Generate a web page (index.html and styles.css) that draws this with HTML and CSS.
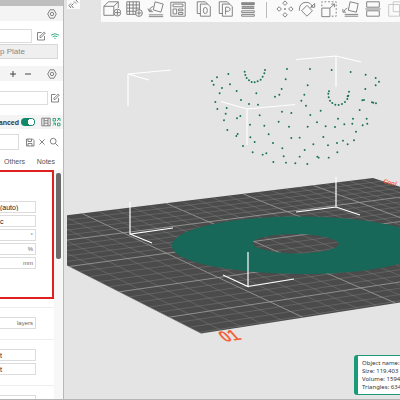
FILE: index.html
```html
<!DOCTYPE html>
<html lang="en">
<head>
<meta charset="utf-8">
<title>Prepare</title>
<link rel="stylesheet" href="styles.css">
</head>
<body>
<svg class="defs" aria-hidden="true">
  <symbol id="gear" viewBox="0 0 10 10"><path d="M3 .8h4L9.3 5 7 9.2H3L.7 5z"/><circle cx="5" cy="5" r="1.7"/></symbol>
  <symbol id="edit" viewBox="0 0 10 10"><path d="M5.5 1.5H1.5v7.5h7V5M4 6.5V5.2L8.2 1 9.3 2 5.2 6.5z"/></symbol>
</svg>

<aside class="sidebar">
  <div class="topbar"></div>
  <div class="section-head">
    <button class="icon" aria-label="Printer settings"><svg><use href="#gear"/></svg></button>
  </div>
  <div class="printer">
    <div class="line">
      <input class="field" type="text" aria-label="Printer">
      <button class="icon" aria-label="Edit printer"><svg><use href="#edit"/></svg></button>
      <button class="icon wifi" aria-label="Connection"><svg viewBox="0 0 10 10"><path d="M1 4.2Q5 1.2 9 4.2M2.6 5.8Q5 4 7.4 5.8M4.4 7.4h1.2"/></svg></button>
    </div>
    <button class="plate">p Plate</button>
  </div>
  <div class="section-head filaments">
    <button class="icon sign" aria-label="Add filament"><svg viewBox="0 0 10 10"><path d="M5 2v6M2 5h6"/></svg></button>
    <button class="icon sign" aria-label="Remove filament"><svg viewBox="0 0 10 10"><path d="M2 5h6"/></svg></button>
    <button class="icon last" aria-label="Filament settings"><svg><use href="#gear"/></svg></button>
  </div>
  <div class="filament line">
    <input class="field" type="text" aria-label="Filament">
    <button class="icon" aria-label="Edit filament"><svg><use href="#edit"/></svg></button>
  </div>
  <div class="mode">
    <label for="advanced">anced</label>
    <input class="toggle" type="checkbox" id="advanced" checked>
    <button class="icon" aria-label="Parameter list"><svg viewBox="0 0 10 10"><path d="M.8 1.2h8.4v7.6H.8zM3 1.2v7.6M7 1.2v7.6M3 3.7h4M3 6.2h4"/></svg></button>
    <button class="icon green" aria-label="Compare presets"><svg viewBox="0 0 10 10"><path d="M2 1.5h2.5v2.5H2zM6 4l3-3M6.5 1.5h2.5v2.5M2 6h2.5v2.5M2 8.5l2.5-2.5M6.5 6.2H9v2.6H6.500z"/></svg></button>
  </div>
  <div class="preset">
    <select aria-label="Process preset"><option></option></select>
    <button class="icon" aria-label="Save"><svg viewBox="0 0 10 10"><path d="M1.500 2h6L9 3.500V9H1.500zM3 2v2.500h3.500V2M3 9V6.500h4V9"/></svg></button>
    <button class="icon" aria-label="Discard"><svg viewBox="0 0 10 10"><path d="M2.500 2.500l5 5M7.500 2.500l-5 5"/></svg></button>
    <button class="icon" aria-label="Search"><svg viewBox="0 0 10 10"><circle cx="4.200" cy="4.200" r="2.900"/><path d="M6.300 6.300L9.300 9.300"/></svg></button>
  </div>
  <nav class="tabs">
    <a href="#others">Others</a>
    <a href="#notes">Notes</a>
  </nav>
  <div class="params">
    <div class="groups">
      <div class="group support">
        <select class="value" aria-label="Type"><option>(auto)</option></select>
        <select class="value" aria-label="Style"><option>c</option></select>
        <div class="value"><input type="text" id="angle" aria-label="Threshold angle"><label for="angle">°</label></div>
        <div class="value"><input type="text" id="overlap" aria-label="Threshold overlap"><label for="overlap">%</label></div>
        <div class="value"><input type="text" id="expand" aria-label="Expansion"><label for="expand">mm</label></div>
      </div>
      <div class="group">
        <div class="value"><input type="text" id="raft"><label for="raft">layers</label></div>
      </div>
      <div class="group">
        <select class="value" aria-label="Support base"><option>t</option></select>
        <select class="value" aria-label="Support interface"><option>t</option></select>
      </div>
      <div class="group">
        <div class="value"><input type="text" aria-label="Speed"></div>
      </div>
    </div>
    <div class="track"><div class="thumb"></div></div>
  </div>
</aside>

<main class="view">
  <svg class="scene" viewBox="64 0 336 400" preserveAspectRatio="xMinYMin slice" role="img" aria-label="Build plate">
    <clipPath id="plateShape"><path d="M67 215.300L373 178L640 265L201 333.500L67 265.500z"/></clipPath>
    <path class="bed" d="M67 215.300L373 178L640 265L201 333.500L67 265.500z"/>
    <g id="grid" clip-path="url(#plateShape)"></g>
    <path class="part" fill-rule="evenodd" d="M172 246C172 229 230 216.500 298 216.500S428 229 428 245S374 274 306 274S172 263 172 246zM253 242C256 237 276 234 296 234S339 239 339 244S318 253.500 296 253.500S250 248 253 242z"/>
    <path class="bracket" d="M171 70L128 74L149 80M128 74V106M296 59.500L336 56L361 62M336 56V87M221 101.500L247 109L295 104.500M247 109V145M130 202V234L173 228M130 234L152 243M336 177V207L296 212M336 207L360 215M248 252V286.500L223 275M248 286.500L294 279"/>
    <g id="dots" transform="translate(200 50) scale(.3333)"></g>
    <text class="number" transform="translate(225 342) rotate(-8) skewX(34)">01</text>
    <text class="name" transform="translate(383 183) rotate(12)">Cool</text>
  </svg>

  <div class="toolbar">
    <button aria-label="Add"><svg viewBox="0 0 20 20"><path d="M1 7h11v10H1zM1 7l5-5h11l-5 5M17 2v7M12 17l1-1"/><circle class="fill" cx="16" cy="14" r="3.800"/><path d="M16 11v6M13 14h6"/></svg></button>
    <button aria-label="Add plate"><svg viewBox="0 0 20 20"><path d="M2 2h14v14H2zM5 2v14M9 2v14M12.500 2v14M2 5.500h14M2 9h14M2 12.500h14"/><circle class="fill" cx="15.500" cy="14.500" r="3.800"/><path d="M15.500 11.500v6M12.500 14.500h6"/></svg></button>
    <button aria-label="Auto orient"><svg viewBox="0 0 20 20"><path d="M9 2l9 2.500-2.500 9L7 11zM2 16.500h16M2 18.500h16M7 7q-4 1-4.500 5M1 9.500l1.500 3 3-1.500M2.500 13h4"/></svg></button>
    <button aria-label="Arrange"><svg viewBox="0 0 20 20"><path d="M2 2.500h16v15.500H2zM4.500 4.500h11v3h-11zM4.500 10h4v5.500h-4zM10.500 10h5v2h-5zM10.500 14h5v2h-5z"/></svg></button>
    <span class="gap"></span>
    <button aria-label="Split to objects"><svg viewBox="0 0 20 20"><path d="M6 15H2.500V2h9L14 4.500"/><path d="M6 4.500h8l3 3V18H6z"/><ellipse cx="11.500" cy="11.700" rx="2.200" ry="3.500"/></svg></button>
    <button aria-label="Split to parts"><svg viewBox="0 0 20 20"><path d="M6 15H2.500V2h9L14 4.500"/><path d="M6 4.500h8l3 3V18H6zM9.500 16V8h3q2 .5 2 2.300T12.500 12.500h-3"/></svg></button>
    <button aria-label="Layer height"><svg viewBox="0 0 20 20"><path d="M3 3h14v2H3zM3 7h14M3 9.500h14M3 12h14v2H3zM3 16h14v2H3z"/><path d="M3 4h14M3 8h14"/></svg></button>
    <span class="sep"></span>
    <button aria-label="Move"><svg viewBox="0 0 20 20"><path d="M10 1l2.500 2.500L10 6 7.500 3.500zM10 14l2.500 2.500L10 19l-2.500-2.500zM3.500 7.500L6 10l-2.500 2.500L1 10zM16.500 7.500L19 10l-2.500 2.500L14 10zM9 10h2M10 9v2"/></svg></button>
    <button aria-label="Rotate"><svg viewBox="0 0 20 20"><path d="M10 6l6 6-6 6-6-6zM1.500 12Q1 3 9 2.500q5 0 7 5M18.500 4v4h-4.500z"/></svg></button>
    <button aria-label="Scale"><svg viewBox="0 0 20 20"><path d="M2 9h9v9.500H2zM11 9l5-4.500M12.500 4.500H16V8"/><path stroke-dasharray="2 2" d="M2 7V2h16v16h-6"/></svg></button>
    <button aria-label="Lay on face"><svg viewBox="0 0 20 20"><path d="M9 2l9 2-2 9.500-9-2zM3 16h15M3 18h15M6 9q-3 1-4 4M1 10v3.500h3.500"/></svg></button>
    <button aria-label="Cut"><svg viewBox="0 0 20 20"><path d="M3 2h14v6H3zM1.500 10h17M3 12h14v6H3z"/></svg></button>
    <button aria-label="Boolean" disabled><svg viewBox="0 0 20 20"><path d="M3 5h12v13H3z"/><path d="M8 2h11v11H8z"/></svg></button>
  </div>

  <button class="collapse" aria-label="Collapse sidebar"><svg viewBox="0 0 11 9"><path d="M3 3.500L1 5.500 3 8M5.500 3.500L3.500 5.500 5.500 8M6 1.500L8 3.500M8 0l2 2.500"/></svg></button>

  <div class="info">
    <div>Object name:</div>
    <div>Size: 119.403</div>
    <div>Volume: 1594</div>
    <div>Triangles: 634</div>
  </div>
</main>
<script src="script.js"></script>
</body>
</html>
```

FILE: styles.css
```css
* {
  box-sizing: border-box;
}
body {
  margin: 0;
  height: 100vh;
  display: flex;
  overflow: hidden;
  font-family: "Liberation Sans", Arial, sans-serif;
  font-size: 7px;
  color: #333;
  background: #e4e4e4;
  border-bottom: 1px solid #b5b5b5;
}
button, input, select {
  font: inherit;
  color: inherit;
  margin: 0;
  padding: 0;
  border: 0;
  background: none;
  appearance: none;
}
svg {
  fill: none;
  stroke: #777;
}
.defs {
  position: absolute;
  width: 0;
  height: 0;
}

.sidebar {
  width: 64px;
  flex: none;
  display: flex;
  flex-direction: column;
  background: #fff;
  border-right: 1px solid #b8b8b8;
}
.topbar {
  height: 6px;
  flex: none;
  background: #bfbfbf;
}
.section-head {
  display: flex;
  justify-content: flex-end;
  align-items: center;
  gap: 5px;
  height: 15px;
  padding-right: 6px;
  background: #f4f4f4;
}
.filaments {
  justify-content: flex-start;
  padding-left: 8px;
}
.last {
  margin-left: auto;
}
.icon {
  width: 10px;
  height: 10px;
  flex: none;
  display: block;
}
.icon svg {
  display: block;
  width: 10px;
  height: 10px;
  stroke-width: .9;
}
.sign svg {
  stroke: #333;
}
.wifi svg, .green svg {
  stroke: #1fa57e;
}
.line {
  display: flex;
  align-items: center;
  gap: 0 4px;
}
.field {
  flex: 1;
  min-width: 0;
  height: 14px;
  border: 1px solid #dcdcdc;
  border-left: 0;
}
.printer {
  padding: 8px 5px 7px 0;
}
.printer .wifi {
  margin-right: -2px;
}
.plate {
  display: block;
  width: 100%;
  height: 15px;
  margin-top: 1px;
  font-size: 8px;
  text-align: left;
  color: #888;
  background: #efefef;
  border: 1px solid #d8d8d8;
  border-left: 0;
  white-space: nowrap;
}
.filament {
  padding: 10px 3px 10px 0;
  gap: 2px;
}
.mode {
  display: flex;
  align-items: center;
  height: 14px;
  background: #f4f4f4;
}
.mode label {
  width: 21px;
  font-weight: bold;
  display: flex;
  justify-content: flex-end;
  padding-right: 2px;
}
.toggle {
  width: 14px;
  height: 8px;
  margin-right: 6px;
  border-radius: 4px;
  background: radial-gradient(circle at 10px 4px, #fff 3px, #12876a 3px);
}
.preset {
  display: flex;
  align-items: center;
  justify-content: space-between;
  padding: 5px 4px 4px 0;
}
.preset select {
  width: 19px;
  height: 16px;
  margin-right: 4px;
  border: 1px solid #dcdcdc;
  border-left: 0;
}
.tabs {
  display: flex;
  justify-content: space-between;
  padding: 3px 8px 4px 4px;
  line-height: 9px;
}
.tabs a {
  color: #555;
  text-decoration: none;
}

.params {
  flex: 1;
  min-height: 0;
  display: flex;
}
.groups {
  flex: 1;
  overflow: hidden;
}
.group {
  display: flex;
  flex-direction: column;
  gap: 2px;
  padding: 9px 0 10px;
  border-top: 1px solid #eee;
}
.support {
  padding: 29px 0 28px;
  margin-bottom: 8px;
  border: 2px solid #e01f1f;
  border-left: 0;
}
.value {
  display: flex;
  align-items: center;
  width: 36px;
  height: 12px;
  padding-right: 2px;
  flex: none;
  border: 1px solid #dcdcdc;
  border-left: 0;
  color: #222;
}
.value input {
  flex: 1;
  min-width: 0;
  width: 0;
}
.value label {
  color: #666;
  font-size: 6px;
}
.track {
  width: 9px;
  padding: 3px 2px;
  background: #f7f7f7;
}
.thumb {
  height: 86px;
  border-radius: 2px;
  background: #6a6a6a;
}

.view {
  flex: 1;
  min-width: 0;
  position: relative;
  overflow: hidden;
}
.scene {
  display: block;
  width: 100%;
  height: 100vh;
  stroke: none;
}
.bed {
  fill: #4a4b4a;
}
.thin {
  stroke: #7b7c7b;
  stroke-width: .5;
}
.bold {
  stroke: #a0a1a0;
  stroke-width: .8;
}
.part {
  fill: #18685a;
}
.bracket {
  stroke: #fff;
  stroke-width: 1.2;
}
.dot {
  fill: #18705a;
}
.number, .name {
  fill: #f2633a;
  font-weight: bold;
}
.number {
  font-size: 16px;
}
.name {
  font-size: 6px;
  font-style: italic;
}
.toolbar {
  position: absolute;
  top: 0;
  left: 37px;
  right: 0;
  height: 22px;
  display: flex;
  overflow: hidden;
  background: #fafafa;
}
.toolbar button {
  width: 22px;
  flex: none;
  padding: 0 2px 4px;
}
.toolbar svg {
  display: block;
  width: 18px;
  height: 18px;
}
.toolbar .fill {
  fill: #fafafa;
}
.toolbar button:disabled {
  opacity: .4;
}
.gap {
  width: 4px;
  flex: none;
}
.sep {
  width: 1px;
  height: 16px;
  margin: 2px 7px;
  flex: none;
  background: #bbb;
}
.collapse {
  position: absolute;
  left: 3px;
  top: 0;
  width: 13px;
  height: 9px;
  background: #fafafa;
}
.collapse svg {
  display: block;
  width: 11px;
  height: 9px;
  margin: 0 auto;
}
.info {
  position: absolute;
  right: 0;
  bottom: 4px;
  padding: 3px 0 3px 4px;
  border-left: 4px solid #1b9a78;
  border-top: 1px solid #1b9a78;
  border-bottom: 1px solid #1b9a78;
  border-radius: 3px 0 0 3px;
  width: 46px;
  overflow: hidden;
  white-space: nowrap;
  font-family: "Noto Sans", sans-serif;
  font-size: 6px;
  line-height: 8px;
  background: #fff;
}
```

FILE: script.js
```javascript
const svgNS = 'http://www.w3.org/2000/svg';

function add(parent, tag, attrs) {
  const el = document.createElementNS(svgNS, tag);
  for (const key in attrs) el.setAttribute(key, attrs[key]);
  parent.appendChild(el);
  return el;
}

function line(parent, x1, y1, x2, y2, bold) {
  add(parent, 'line', { x1, y1, x2, y2, class: bold ? 'bold' : 'thin' });
}

// every fifth line is a bold one, the values are where the bold ones start
const topX = [-13, 82, 166, 243, 313, 373];
const bottomX = [201, 303, 395, 480, 560, 635];
const leftX = [219, 169, 119, 69, 27, -13];

const topY = x => 215.3 - 0.122 * (x - 67);
const bottomY = x => 333.5 - 0.158 * (x - 201);
const leftY = x => 265.5 + 0.507 * (x - 67);

function drawGrid(parent) {
  for (let i = 0; i < 5; i++) {
    for (let k = 0; k < 5; k++) {
      const t = k / 5;
      const a = topX[i] + (topX[i + 1] - topX[i]) * t;
      const b = bottomX[i] + (bottomX[i + 1] - bottomX[i]) * t;
      line(parent, a, topY(a), b, bottomY(b), k === 0);

      const x = leftX[i] + (leftX[i + 1] - leftX[i]) * t;
      const slope = 0.122 + 0.036 * (x + 13) / 214;
      line(parent, x, leftY(x), x + 600, leftY(x) - slope * 600, k === 0);
    }
  }
}
drawGrid(document.getElementById('grid'));

const dots = [
  [36,93],[41,104],[51,82],[85,72],[66,114],[59,130],[90,103],[110,123],[46,156],[52,177],
  [80,174],[77,191],[72,211],[82,240],[123,150],[147,162],[174,164],[169,130],[225,140],[238,134],
  [245,117],[257,88],[261,57],[330,57],[395,60],[452,66],[497,74],[527,84],[537,95],[527,106],
  [496,117],[323,106],[313,134],[304,152],[318,167],[362,182],[331,195],[351,217],[323,230],[267,230],
  [274,189],[246,185],[236,215],[179,196],[193,227],[150,224],[121,198],[111,205],[113,252],[109,258],
  [151,262],[164,276],[129,288],[158,307],[188,314],[199,310],[220,336],[206,253],[219,279],[247,295],
  [251,319],[258,338],[286,340],[299,320],[322,342],[314,300],[340,283],[274,264],[299,263],[370,261],
  [352,320],[356,323],[386,323],[384,286],[411,279],[429,272],[412,307],[443,283],[462,271],[468,245],
  [377,229],[405,231],[414,206],[433,223],[457,221],[459,206],[479,180],[488,226],[502,221],[500,206],
  [487,151],[492,150],[516,157],[520,158],[528,160],
  [134,65],[136,75],[140,84],[147,91],[155,96],[164,97],[173,94],[182,89],[188,80],[193,70],[195,60],
  [387,124],[385,131],[386,142],[390,152],[397,159],[406,164],[416,165],[426,162],[435,156],[442,147],[445,137],[447,125],[443,139]
];
const dotLayer = document.getElementById('dots');
dots.forEach(([cx, cy]) => add(dotLayer, 'circle', { cx, cy, r: 2.9, class: 'dot' }));
```
